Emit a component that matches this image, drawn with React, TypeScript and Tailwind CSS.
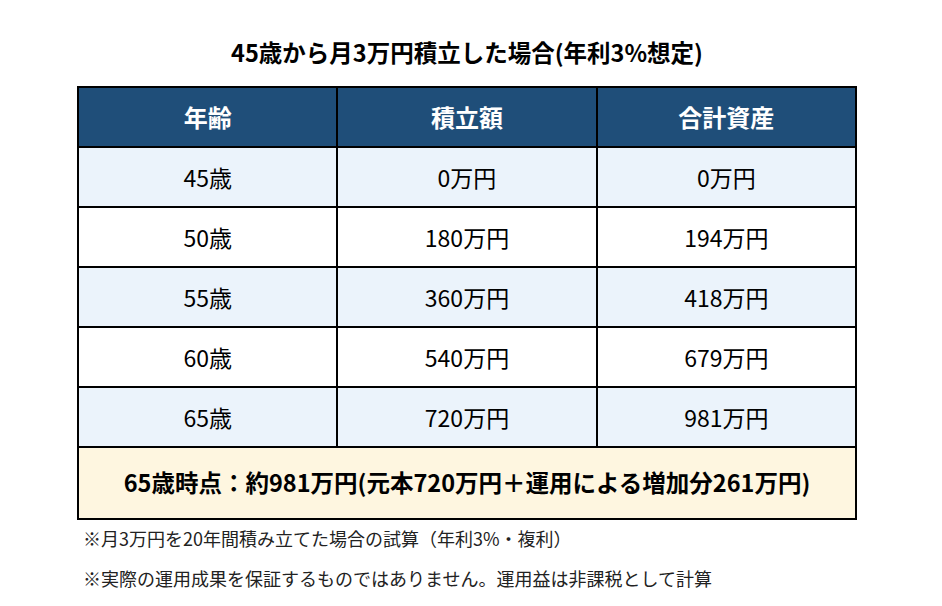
const rows = [
  { age: "45歳", paid: "0万円", total: "0万円" },
  { age: "50歳", paid: "180万円", total: "194万円" },
  { age: "55歳", paid: "360万円", total: "418万円" },
  { age: "60歳", paid: "540万円", total: "679万円" },
  { age: "65歳", paid: "720万円", total: "981万円" },
]

export default function App() {
  return (
    <main
      className="w-[942px] h-[606px] bg-white text-black pt-[37px]"
      style={{ fontFamily: '"Noto Sans CJK JP", "Noto Sans", sans-serif' }}
    >
      <h1 className="text-[23.5px] leading-[30px] font-bold text-center ml-[77px] w-[780px] mb-[19px]">
        45歳から月3万円積立した場合(年利3%想定)
      </h1>

      <table className="ml-[77px] w-[780px] border-collapse table-fixed">
        <thead>
          <tr className="bg-[#1f4e79] text-white">
            <th className="h-[60px] border-2 border-black text-[24px] font-bold">年齢</th>
            <th className="h-[60px] border-2 border-black text-[24px] font-bold">積立額</th>
            <th className="h-[60px] border-2 border-black text-[24px] font-bold">合計資産</th>
          </tr>
        </thead>
        <tbody>
          {rows.map((r, i) => (
            <tr key={r.age} className={i % 2 === 0 ? "bg-[#ebf3fb]" : "bg-white"}>
              <td className="h-[60px] border-2 border-black text-center text-[23px]">{r.age}</td>
              <td className="h-[60px] border-2 border-black text-center text-[23px]">{r.paid}</td>
              <td className="h-[60px] border-2 border-black text-center text-[23px]">{r.total}</td>
            </tr>
          ))}
          <tr className="bg-[#fef6e0]">
            <td colSpan={3} className="h-[72px] border-2 border-black text-center text-[23.5px] font-bold">
              65歳時点：約981万円(元本720万円＋運用による増加分261万円)
            </td>
          </tr>
        </tbody>
      </table>

      <div className="ml-[83px] text-[18px] leading-[24px] text-[#222]">
        <p className="mt-[6px]">※月3万円を20年間積み立てた場合の試算（年利3%・複利）</p>
        <p className="mt-[16px]">※実際の運用成果を保証するものではありません。運用益は非課税として計算</p>
      </div>
    </main>
  )
}
